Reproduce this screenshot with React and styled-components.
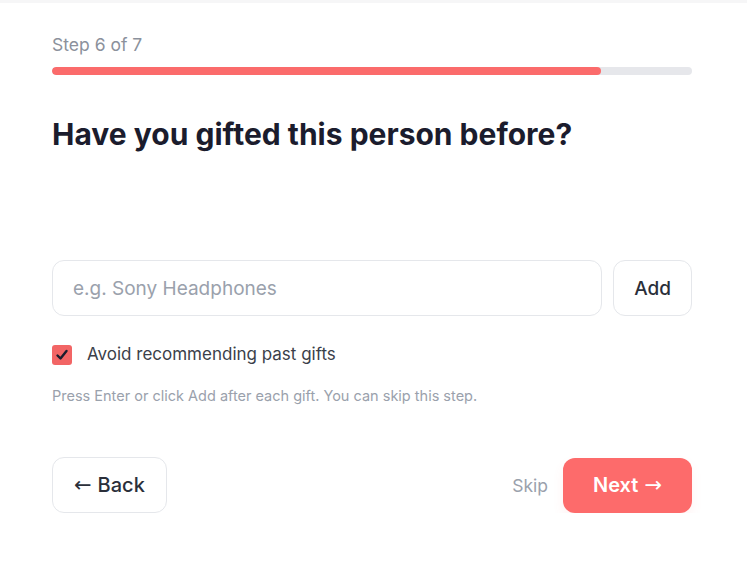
import React, { useState } from 'react';
import styled, { createGlobalStyle } from 'styled-components';

const GlobalStyle = createGlobalStyle`
  * { box-sizing: border-box; }
  body {
    margin: 0;
    background: #ffffff;
    font-family: Inter, 'Noto Sans', sans-serif;
  }
`;

const Page = styled.div`
  border-top: 3px solid #f6f6f7;
  padding: 32px 55px 0 52px;
  display: flex;
  flex-direction: column;
`;

const StepLabel = styled.div`
  font-size: 17.5px;
  color: #8b919c;
  line-height: 20px;
`;

const Track = styled.div`
  margin-top: 12px;
  height: 8px;
  border-radius: 4px;
  background: #e6e7eb;
  overflow: hidden;
`;

const Fill = styled.div`
  height: 100%;
  border-radius: 4px;
  background: #fb6b6b;
`;

const Title = styled.h1`
  margin: 41px 0 0;
  font-size: 30px;
  font-weight: 700;
  line-height: 36px;
  color: #1b1c2d;
`;

const InputRow = styled.div`
  margin-top: 108px;
  display: flex;
  gap: 11px;
`;

const TextInput = styled.input`
  flex: 1;
  height: 56px;
  border: 1px solid #e5e7eb;
  border-radius: 12px;
  padding: 0 20px;
  font-family: inherit;
  font-size: 19px;
  color: #1b1c2d;
  outline: none;

  &::placeholder {
    color: #9aa1ac;
  }
`;

const GhostButton = styled.button`
  height: 56px;
  padding: 0 ${({ pad }) => pad}px;
  border: 1px solid #e5e7eb;
  border-radius: 12px;
  background: #ffffff;
  font-family: inherit;
  font-size: ${({ size }) => size}px;
  font-weight: ${({ weight }) => weight};
  color: #2b2f3a;
  cursor: pointer;
`;

const Arrow = styled.span`
  font-family: 'DejaVu Sans', sans-serif;
  font-weight: 400;
  font-size: 21px;
  margin: ${({ side }) => (side === 'left' ? '0 6px 0 0' : '0 0 0 6px')};
`;

const CheckRow = styled.label`
  margin-top: 28px;
  display: flex;
  align-items: center;
  gap: 15px;
  font-size: 17px;
  line-height: 21px;
  color: #3b3f4a;
  cursor: pointer;
`;

const Box = styled.span`
  width: 20px;
  height: 20px;
  border-radius: 3px;
  background: #f26565;
  display: flex;
  align-items: center;
  justify-content: center;
`;

const Hint = styled.p`
  margin: 22px 0 0;
  font-size: 14.5px;
  color: #9aa1ac;
  line-height: 18px;
`;

const Footer = styled.div`
  margin-top: 52px;
  display: flex;
  align-items: center;
  justify-content: space-between;
`;

const RightGroup = styled.div`
  display: flex;
  align-items: center;
  gap: 15px;
`;

const SkipLink = styled.button`
  border: none;
  background: none;
  padding: 0;
  font-family: inherit;
  font-size: 17.5px;
  color: #9aa1ac;
  cursor: pointer;
`;

const PrimaryButton = styled.button`
  height: 55px;
  padding: 0 30px;
  border: none;
  border-radius: 12px;
  background: #fd6b6b;
  color: #ffffff;
  font-family: inherit;
  font-size: 20px;
  font-weight: 600;
  box-shadow: 0 6px 12px rgba(253, 107, 107, 0.08);
  cursor: pointer;
`;

export default function App() {
  const [checked, setChecked] = useState(true);
  const step = 6;
  const total = 7;

  return (
    <>
      <GlobalStyle />
      <Page>
        <StepLabel>Step {step} of {total}</StepLabel>
        <Track>
          <Fill style={{ width: `${(step / total) * 100}%` }} />
        </Track>
        <Title>Have you gifted this person before?</Title>
        <InputRow>
          <TextInput placeholder="e.g. Sony Headphones" />
          <GhostButton pad={20} size={19} weight={500}>Add</GhostButton>
        </InputRow>
        <CheckRow onClick={() => setChecked(!checked)}>
          <Box>
            {checked && (
              <svg width="14" height="14" viewBox="0 0 14 14">
                <path d="M2.5 7.5 L5.5 10.5 L11.5 3" fill="none" stroke="#1b1c2d" strokeWidth="2.4" strokeLinecap="round" strokeLinejoin="round" />
              </svg>
            )}
          </Box>
          Avoid recommending past gifts
        </CheckRow>
        <Hint>Press Enter or click Add after each gift. You can skip this step.</Hint>
        <Footer>
          <GhostButton pad={21} size={20} weight={450}>
            <Arrow side="left">←</Arrow>Back
          </GhostButton>
          <RightGroup>
            <SkipLink>Skip</SkipLink>
            <PrimaryButton>
              Next<Arrow side="right">→</Arrow>
            </PrimaryButton>
          </RightGroup>
        </Footer>
      </Page>
    </>
  );
}
